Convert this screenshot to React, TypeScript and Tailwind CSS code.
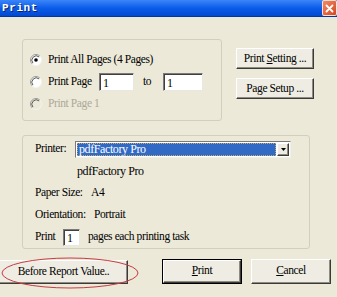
const serif = "font-['Liberation_Serif',serif]";

function Radio({ checked, disabled }: { checked?: boolean; disabled?: boolean }) {
  return (
    <svg width="12" height="12" viewBox="0 0 12 12" className="shrink-0">
      <circle cx="6" cy="6" r="5.5" fill={disabled ? "#ece9d8" : "#ffffff"} />
      <path d="M2.11 9.89 A5.5 5.5 0 0 1 9.89 2.11" fill="none" stroke="#9a9a9a" strokeWidth="1" />
      <path d="M9.89 2.11 A5.5 5.5 0 0 1 2.11 9.89" fill="none" stroke="#f4f4f0" strokeWidth="1" />
      <path d="M2.9 9.1 A4.4 4.4 0 0 1 9.1 2.9" fill="none" stroke="#5a5a5a" strokeWidth="1" />
      {checked && <circle cx="6" cy="6" r="1.8" fill="#000000" />}
    </svg>
  );
}

function Field({ value, className }: { value: string; className: string }) {
  return (
    <div
      className={`bg-white border border-t-[#7a7a7a] border-l-[#7a7a7a] border-b-[#e8e8e0] border-r-[#e8e8e0] shadow-[inset_1px_1px_0_#404040] flex items-end pl-[3px] pb-[1px] leading-none ${className}`}
    >
      <span className="text-[12px]">{value}</span>
    </div>
  );
}

function Button({ children, className }: { children: React.ReactNode; className: string }) {
  return (
    <div
      className={`bg-[#efede3] border border-t-white border-l-white border-b-[#3a3a3a] border-r-[#3a3a3a] shadow-[inset_-1px_-1px_0_#8e8c80] flex items-center justify-center ${className}`}
    >
      {children}
    </div>
  );
}

export default function App() {
  return (
    <div className={`relative w-[337px] h-[297px] overflow-hidden bg-[#ece9d8] text-black text-[11.5px] tracking-[-0.4px] ${serif}`}>
      {/* Title bar */}
      <div className="h-[17px] flex items-center justify-between bg-gradient-to-b from-[#3a85f8] via-[#0a5ceb] to-[#0449cf] border-b border-[#0036a8]">
        <span className="pl-[2px] text-white font-bold text-[11px] tracking-[0.6px] font-['Liberation_Mono',monospace] [text-shadow:1px_1px_0_#0a246a]">
          Print
        </span>
        <div className="w-[15px] h-[16px] rounded-[2px] bg-gradient-to-br from-[#f08a64] to-[#d3461e] border border-white/80 flex items-center justify-center">
          <svg width="9" height="9" viewBox="0 0 9 9">
            <path d="M1.5 1.5 L7.5 7.5 M7.5 1.5 L1.5 7.5" stroke="#ffffff" strokeWidth="1.8" strokeLinecap="round" />
          </svg>
        </div>
      </div>

      {/* Top row */}
      <div className="flex items-start pt-[22px]">
        <div className="ml-[22px] w-[200px] h-[82px] border border-[#d0d0bf] rounded-[3px] pt-[9px] pl-[7px]">
          <div className="h-[22px] flex items-center">
            <Radio checked />
            <span className="ml-[6px]">Print All Pages (4 Pages)</span>
          </div>
          <div className="h-[22px] flex items-center">
            <Radio />
            <span className="ml-[6px] w-[51px]">Print Page</span>
            <Field value="1" className="w-[35px] h-[18px]" />
            <span className="w-[29px] pl-[9px]">to</span>
            <Field value="1" className="w-[40px] h-[18px]" />
          </div>
          <div className="h-[22px] flex items-center text-[#aca899]">
            <Radio disabled />
            <span className="ml-[6px]">Print Page 1</span>
          </div>
        </div>

        <div className="ml-[14px] mt-[9px] flex flex-col gap-[9px]">
          <Button className="w-[78px] h-[21px]">
            <span>
              Print <span className="underline">S</span>etting ...
            </span>
          </Button>
          <Button className="w-[78px] h-[21px]">
            <span>Page Setup ...</span>
          </Button>
        </div>
      </div>

      {/* Printer group */}
      <div className="ml-[22px] mt-[14px] w-[288px] h-[114px] border border-[#d0d0bf] rounded-[3px] pt-[2px] pl-[12px]">
        <div className="h-[22px] flex items-center">
          <span className="w-[40px]">Printer:</span>
          <div className="w-[216px] h-[17px] bg-white border border-t-[#7a7a7a] border-l-[#7a7a7a] border-b-[#f0f0ea] border-r-[#f0f0ea] flex items-stretch p-[1px]">
            <div className="flex-1 bg-[#316ac5] outline outline-1 outline-dotted outline-[#c9a96a] -outline-offset-1 flex items-center pl-[2px] text-white text-[12px]">
              pdfFactory Pro
            </div>
            <Button className="w-[12px] ml-[1px]">
              <svg width="5" height="3" viewBox="0 0 5 3">
                <path d="M0 0 H5 L2.5 3 Z" fill="#000000" />
              </svg>
            </Button>
          </div>
        </div>
        <div className="h-[22px] flex items-center">
          <span className="ml-[42px] text-[12px]">pdfFactory Pro</span>
        </div>
        <div className="h-[22px] flex items-center">
          <span className="w-[56px]">Paper Size:</span>
          <span>A4</span>
        </div>
        <div className="h-[22px] flex items-center">
          <span className="w-[59px]">Orientation:</span>
          <span>Portrait</span>
        </div>
        <div className="h-[22px] flex items-center">
          <span className="w-[28px]">Print</span>
          <Field value="1" className="w-[17px] h-[17px]" />
          <span className="ml-[8px]">pages each printing task</span>
        </div>
      </div>

      {/* Bottom buttons */}
      <div className="mt-[9px] flex items-center">
        <Button className="w-[129px] h-[24px] -ml-[1px] mt-[2px]">
          <span>Before Report Value..</span>
        </Button>
        <div className="ml-[34px] border border-black">
          <Button className="w-[78px] h-[23px]">
            <span>
              <span className="underline">P</span>rint
            </span>
          </Button>
        </div>
        <Button className="ml-[9px] w-[80px] h-[25px]">
          <span>
            <span className="underline">C</span>ancel
          </span>
        </Button>
      </div>

      {/* Red annotation ellipse */}
      <svg className="absolute left-0 top-[254px]" width="142" height="40" viewBox="0 0 142 40">
        <ellipse cx="70" cy="19" rx="68" ry="15" fill="none" stroke="#c73a44" strokeWidth="1" />
      </svg>
    </div>
  );
}
